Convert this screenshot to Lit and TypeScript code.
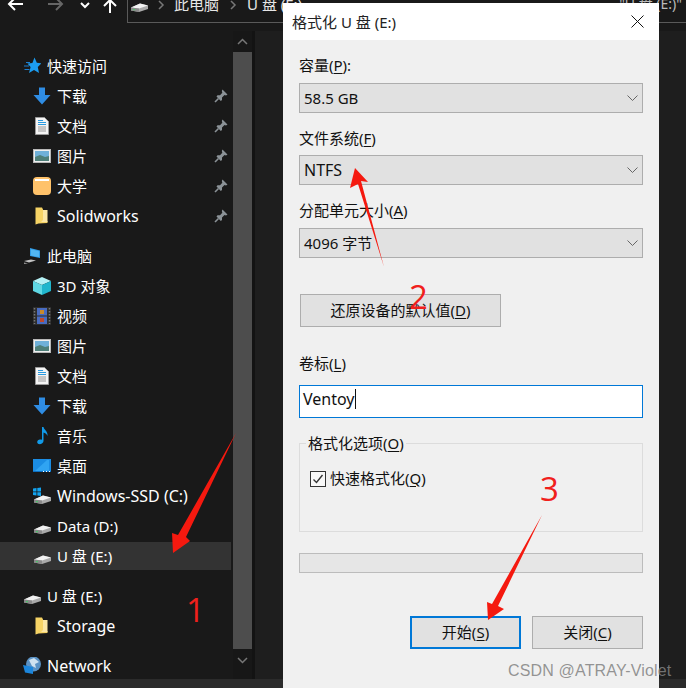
import { LitElement, html, css, svg } from "lit";
import { customElement } from "lit/decorators.js";

type Row = { icon: string; label: string; head?: boolean; pin?: boolean; sel?: boolean; gap?: boolean; latin?: boolean };

const rows: Row[] = [
  { icon: "star", label: "快速访问", head: true },
  { icon: "down", label: "下载", pin: true },
  { icon: "doc", label: "文档", pin: true },
  { icon: "pic", label: "图片", pin: true },
  { icon: "orange", label: "大学", pin: true },
  { icon: "folder", label: "Solidworks", pin: true, latin: true },
  { icon: "pc", label: "此电脑", head: true, gap: true },
  { icon: "cube", label: "3D 对象" },
  { icon: "film", label: "视频" },
  { icon: "pic", label: "图片" },
  { icon: "doc", label: "文档" },
  { icon: "down", label: "下载" },
  { icon: "note", label: "音乐" },
  { icon: "desk", label: "桌面" },
  { icon: "win", label: "Windows-SSD (C:)", latin: true },
  { icon: "drive", label: "Data (D:)" },
  { icon: "drive", label: "U 盘 (E:)", sel: true },
  { icon: "drive", label: "U 盘 (E:)", head: true, gap: true },
  { icon: "folder", label: "Storage", latin: true },
  { icon: "net", label: "Network", head: true, gap: true, latin: true },
];

const driveShape = svg`
  <path d="M1 12.5 10 8.5 18 10.5 18 14 9 17 1 15.5Z" fill="#a9a9a9"/>
  <path d="M1 12.5 10 8.5 18 10.5 9 13.5Z" fill="#f2f2f2"/>
  <path d="M1 12.5 9 13.5 9 17 1 15.5Z" fill="#8a8a8a"/>
  <rect x="3" y="14" width="2" height="1.2" fill="#4fc06a"/>`;

const art: Record<string, unknown> = {
  star: svg`<path d="M11.5 0.5 13.8 5.8 18.5 6.3 14.8 10 16 16 11 13 6 16 7.6 10 4.5 6.6 9.4 6Z" fill="#1c9df0"/>
    <path d="M3 5.5H7M1 9H6M1.5 12.5H6.5" stroke="#1c7fd0" stroke-width="1"/>`,
  down: svg`<path d="M6 0.5H12V8H17.5L9 17.5 0.5 8H6Z" fill="#2f8de4"/>`,
  doc: svg`<path d="M2.5 0.5H11.5L15.5 4.5V17.5H2.5Z" fill="#f4f4f4" stroke="#9a9a9a"/>
    <path d="M5 3.5H10M5 5.5H13M5 7.5H13" stroke="#2a9be0" stroke-width="1"/>
    <path d="M5 10H13M5 12H13M5 14H13" stroke="#999" stroke-width="1"/>`,
  pic: svg`<rect x="0.5" y="2.5" width="17" height="13" fill="#eee" stroke="#b8b8b8"/>
    <rect x="2" y="4" width="14" height="10" fill="#6fb0d8"/>
    <path d="M2 10 7 8 12 10 16 9V14H2Z" fill="#4e7f78"/>`,
  orange: svg`<rect x="0" y="0" width="18" height="18" rx="4" fill="#ffc26a"/><rect x="2" y="2" width="14" height="2" fill="#fff"/>`,
  folder: svg`<path d="M2.5 0.5H9L10 2.5V14H14.5V16L5.5 16.5 2.5 17.5Z" fill="#f6d365"/>
    <path d="M10 3H14.5V15H8L10 13Z" fill="#fbe6a4"/>`,
  pc: svg`<path d="M7 1 17 3.5V11L7 9Z" fill="#2f9be6"/><path d="M8 2.2 16 4.2V10L8 8.4Z" fill="#52b6f2"/>
    <path d="M1 14 8 12.5 13 13.5 6 15.5Z" fill="#c4c4c4"/><path d="M1 15.5 5 16.5 1 17Z" fill="#9a9a9a"/>`,
  cube: svg`<path d="M9 0 18 4 9 8 0 4Z" fill="#b5f1f5"/><path d="M0 4 9 8V18L0 14Z" fill="#5fd7e3"/><path d="M18 4 9 8V18L18 14Z" fill="#21b6cd"/>`,
  film: svg`<rect x="0" y="0" width="18" height="18" fill="#2d2d2d"/>
    <rect x="4" y="1" width="10" height="7.5" fill="#4a6cc0"/><rect x="4" y="9.5" width="10" height="7.5" fill="#4a6cc0"/>
    <rect x="7" y="3" width="4" height="4" fill="#c98a2c"/><rect x="7" y="11" width="4" height="4" fill="#c0492c"/>
    <path d="M1.5 1V17M16.5 1V17" stroke="#777" stroke-width="1.5" stroke-dasharray="1.5 1.5"/>`,
  note: svg`<path d="M9 0H10.5C11 3 15 4 14.5 9 13.5 6.5 12 6 10.5 5.5V14C10.5 16.5 7.5 17.5 5.5 17 3.5 16 4 13.5 6 12.8 7 12.4 8 12.4 9 12.8Z" fill="#119ae8"/>`,
  desk: svg`<rect x="0" y="2" width="18" height="13" fill="#1b8de4"/><path d="M2 14 14 3H16V14Z" fill="#30a4f2"/>
    <path d="M0 14.5H18" stroke="#0d6fc0"/><path d="M10 14.5H11M13 14.5H14M16 14.5H17" stroke="#fff"/>`,
  drive: driveShape,
  win: svg`${driveShape}<path d="M0 1.5 3.5 1V4.5H0ZM4.3 1 8 0.5V4.5H4.3ZM0 5.3H3.5V8.5L0 8ZM4.3 5.3H8V9L4.3 8.5Z" fill="#12a3ef"/>`,
  net: svg`<circle cx="10.5" cy="7" r="7.5" fill="#5b92c4"/><path d="M6 3 11 1 16 5 12 7 13 11 9 9Z" fill="#cfe2f0"/>
    <path d="M0 8 10 10V17L2 15.5Z" fill="#1c86dc"/>`,
};

@customElement("app-root")
export class AppRoot extends LitElement {
  static styles = css`
    :host {
      display: block;
      position: relative;
      width: 686px;
      height: 688px;
      overflow: hidden;
      background: #191919;
      color: #fff;
      font: 15px/20px "Noto Sans", "Noto Sans CJK SC", sans-serif;
    }
    .toolbar { display: flex; height: 31px; overflow: hidden; }
    .tools { width: 127px; flex: none; display: flex; align-items: flex-start; }
    .tools svg { flex: none; }
    .t-back { margin: -3px 0 0 7px; }
    .t-fwd { margin: -3px 0 0 22px; }
    .t-drop { margin: 2px 0 0 15px; }
    .t-up { margin: -2px 0 0 13px; }
    .address {
      flex: 1;
      height: 23px;
      box-sizing: border-box;
      border-left: 1px solid #5a5a5a;
      border-bottom: 1px solid #5a5a5a;
      display: flex;
      align-items: flex-start;
      padding-left: 2px;
      overflow: hidden;
      color: #e6e6e6;
      white-space: nowrap;
    }
    .address .a-drive { margin-top: -5px; }
    .address .crumb { margin: -6px 0 0 0; }
    .address .sep { margin: 0 9px 0 9px; flex: none; }
    .address .sep.wide { margin-left: 10px; margin-right: 10px; }
    .search { margin: -6px 4px 0 auto; font-size: 14px; color: #bbb; }
    .main { display: flex; height: 648px; overflow: hidden; }
    .nav {
      width: 231px;
      flex: none;
      padding-top: 21px;
      display: flex;
      flex-direction: column;
      gap: 2px;
    }
    .row { height: 28px; display: flex; align-items: center; padding-left: 33px; gap: 6px; flex: none; box-sizing: border-box; }
    .row.head { padding-left: 23px; }
    .row.gap { margin-top: 10px; }
    .row.sel { background: #333; }
    .row .ic { width: 18px; height: 18px; flex: none; }
    .row .pin { margin-left: auto; margin-right: 3px; flex: none; }
    .row span { white-space: nowrap; }
    .latin { font-size: 16px; }
    .scroll { margin-left: 2px; width: 19px; flex: none; display: flex; flex-direction: column; background: #171717; }
    .scroll .cap { height: 21px; display: flex; align-items: center; justify-content: center; flex: none; }
    .scroll .cap.end { height: 30px; padding-bottom: 8px; box-sizing: border-box; }
    .scroll .thumb { flex: 1; background: #4d4d4d; }
    .rule { width: 3px; flex: none; background: #131313; }
    .pane { flex: 1; background: #1e1e1e; }
    .status { height: 9px; background: #2b2b2b; padding: 6px 0 0 26px; box-sizing: border-box; overflow: visible; font-size: 14px; color: #ddd; }

    .dialog {
      position: absolute;
      left: 283px;
      top: 3px;
      width: 376px;
      height: 685px;
      background: #f0f0f0;
      color: #111;
      display: flex;
      flex-direction: column;
    }
    .titlebar { height: 37px; flex: none; background: #fff; display: flex; align-items: center; padding: 0 15px 0 9px; color: #222; }
    .titlebar svg { margin-left: auto; }
    .body { padding: 16px 16px 0; display: flex; flex-direction: column; }
    u { text-underline-offset: 2px; }
    .label { height: 20px; line-height: 18px; }
    .mt7 { margin-top: 7px; }
    .mt6 { margin-top: 6px; }
    .mt16 { margin-top: 16px; }
    .select {
      height: 30px;
      box-sizing: border-box;
      background: #e1e1e1;
      border: 1px solid #adadad;
      display: flex;
      align-items: center;
      padding: 0 3px 0 4px;
      justify-content: space-between;
    }
    .reset {
      width: 201px;
      height: 33px;
      box-sizing: border-box;
      margin: 36px 0 0 1px;
      padding-bottom: 2px;
      background: #e1e1e1;
      border: 1px solid #adadad;
      display: flex;
      align-items: center;
      justify-content: center;
    }
    .vol { margin-top: 27px; }
    .input {
      margin-top: 11px;
      height: 33px;
      box-sizing: border-box;
      background: #fff;
      border: 1px solid #0078d7;
      display: flex;
      align-items: center;
      padding: 0 0 6px 3px;
    }
    .caret { width: 1px; height: 20px; background: #111; }
    fieldset {
      margin: 15px 0 0;
      padding: 0;
      height: 99px;
      box-sizing: border-box;
      border: 1px solid #dcdcdc;
      min-width: 0;
    }
    legend { margin-left: 6px; padding: 0 2px; line-height: 20px; }
    .check { display: flex; align-items: center; gap: 4px; margin: 16px 0 0 10px; height: 20px; }
    .check span { line-height: 18px; height: 20px; }
    .box { width: 16px; height: 16px; box-sizing: border-box; border: 1px solid #333; background: #f8f8f8; display: flex; }
    .progress { margin-top: 21px; height: 20px; box-sizing: border-box; background: #e6e6e6; border: 1px solid #bcbcbc; }
    .footer { margin-top: 43px; display: flex; justify-content: flex-end; gap: 11px; }
    .btn {
      width: 111px;
      height: 33px;
      box-sizing: border-box;
      padding-bottom: 2px;
      background: #e1e1e1;
      border: 1px solid #adadad;
      display: flex;
      align-items: center;
      justify-content: center;
    }
    .btn.primary { border: 2px solid #0078d7; }

    .marks { position: absolute; left: 0; top: 0; pointer-events: none; }
    .num { position: absolute; color: #f0201c; font: 400 33px/40px "Open Sans", sans-serif; pointer-events: none; }
    .n1 { left: 186px; top: 590px; }
    .n2 { left: 409px; top: 277px; }
    .n3 { left: 540px; top: 469px; }
    .mark {
      position: absolute;
      left: 508px;
      top: 661px;
      font: 16px/20px "Liberation Sans", sans-serif;
      letter-spacing: 0.16px;
      color: rgba(130, 130, 130, 0.85);
      white-space: nowrap;
      pointer-events: none;
    }
  `;

  private icon(name: string) {
    return html`<svg class="ic" viewBox="0 0 18 18" width="18" height="18">${art[name]}</svg>`;
  }

  private pin() {
    return html`<svg class="pin" width="14" height="14" viewBox="0 0 14 14">
      <path d="M8.5 0.5 13.5 5.5 12 6.5 10.5 6 8 8.5 8 11 6.8 12 2.5 7.5 3.5 6.3 6 6.3 8.3 3.8 7.8 2Z" fill="#8b9297"/>
      <path d="M4.5 9.5 1 13" stroke="#8b9297" stroke-width="1.6"/>
    </svg>`;
  }

  private chev(color = "#666") {
    return html`<svg width="13" height="8" viewBox="0 0 13 8"><path d="M1.5 1.5 6.5 6.5 11.5 1.5" fill="none" stroke="${color}"/></svg>`;
  }

  private select(text: string, latin = false) {
    return html`<div class="select"><span class="${latin ? "latin" : ""}">${text}</span>${this.chev()}</div>`;
  }

  render() {
    return html`
      <div class="toolbar">
        <div class="tools">
          <svg class="t-back" width="18" height="14" viewBox="0 0 18 14"><path d="M16 7H2M8 1 2 7 8 13" fill="none" stroke="#fff" stroke-width="2"/></svg>
          <svg class="t-fwd" width="18" height="14" viewBox="0 0 18 14"><path d="M1 7H15M9 1 15 7 9 13" fill="none" stroke="#666" stroke-width="2"/></svg>
          <svg class="t-drop" width="10" height="7" viewBox="0 0 10 7"><path d="M1 1 5 5 9 1" fill="none" stroke="#fff" stroke-width="2"/></svg>
          <svg class="t-up" width="14" height="16" viewBox="0 0 14 16"><path d="M7 15V2M1 8 7 2 13 8" fill="none" stroke="#fff" stroke-width="2"/></svg>
        </div>
        <div class="address">
          <svg class="a-drive ic" viewBox="0 0 18 18" width="18" height="18">${driveShape}</svg>
          <svg class="sep" width="8" height="10" viewBox="0 0 8 10"><path d="M2 1 6 5 2 9" fill="none" stroke="#777" stroke-width="1.5"/></svg>
          <span class="crumb">此电脑</span>
          <svg class="sep wide" width="8" height="10" viewBox="0 0 8 10"><path d="M2 1 6 5 2 9" fill="none" stroke="#777" stroke-width="1.5"/></svg>
          <span class="crumb">U 盘 (E:)</span>
          <span class="search">"U 盘 (E:)"</span>
        </div>
      </div>
      <div class="main">
        <nav class="nav">
          ${rows.map(
            (r) => html`<div class="row ${r.head ? "head" : ""} ${r.sel ? "sel" : ""} ${r.gap ? "gap" : ""}">
              ${this.icon(r.icon)}<span class="${r.latin ? "latin" : ""}">${r.label}</span>${r.pin ? this.pin() : ""}
            </div>`
          )}
        </nav>
        <div class="scroll">
          <div class="cap"><svg width="11" height="7" viewBox="0 0 11 7"><path d="M1 6 5.5 1.5 10 6" fill="none" stroke="#777" stroke-width="1.5"/></svg></div>
          <div class="thumb"></div>
          <div class="cap end"><svg width="11" height="7" viewBox="0 0 11 7"><path d="M1 1 5.5 5.5 10 1" fill="none" stroke="#777" stroke-width="1.5"/></svg></div>
        </div>
        <div class="rule"></div>
        <div class="pane"></div>
      </div>
      <div class="status">4 个项目</div>

      <section class="dialog">
        <header class="titlebar">
          <span>格式化 U 盘 (E:)</span>
          <svg width="13" height="13" viewBox="0 0 13 13"><path d="M0.5 0.5 12.5 12.5M12.5 0.5 0.5 12.5" stroke="#111" stroke-width="1"/></svg>
        </header>
        <div class="body">
          <div class="label">容量(<u>P</u>):</div>
          <div class="mt7">${this.select("58.5 GB")}</div>
          <div class="label mt16">文件系统(<u>F</u>)</div>
          <div class="mt6">${this.select("NTFS", true)}</div>
          <div class="label mt16">分配单元大小(<u>A</u>)</div>
          <div class="mt7">${this.select("4096 字节")}</div>
          <div class="reset"><span>还原设备的默认值(<u>D</u>)</span></div>
          <div class="label vol">卷标(<u>L</u>)</div>
          <div class="input"><span class="latin">Ventoy</span><i class="caret"></i></div>
          <fieldset>
            <legend>格式化选项(<u>O</u>)</legend>
            <div class="check">
              <div class="box"><svg width="14" height="14" viewBox="0 0 14 14"><path d="M2.5 7.5 5.5 10.5 11.5 3" fill="none" stroke="#333" stroke-width="1.4"/></svg></div>
              <span>快速格式化(<u>Q</u>)</span>
            </div>
          </fieldset>
          <div class="progress"></div>
          <div class="footer">
            <div class="btn primary"><span>开始(<u>S</u>)</span></div>
            <div class="btn"><span>关闭(<u>C</u>)</span></div>
          </div>
        </div>
      </section>

      <svg class="marks" width="686" height="688" viewBox="0 0 686 688">
        <path d="M236 433 186 537 190 541 173 553 172 533 178 535Z" fill="#f5190f"/>
        <path d="M355 168 368 182 361 181 384 267 358 184 350 188Z" fill="#f5190f"/>
        <path d="M542 515 498 606 504 609 488 620 487 602 492 604Z" fill="#f5190f"/>
      </svg>
      <div class="num n1">1</div>
      <div class="num n2">2</div>
      <div class="num n3">3</div>
      <div class="mark">CSDN @ATRAY-Violet</div>
    `;
  }
}
